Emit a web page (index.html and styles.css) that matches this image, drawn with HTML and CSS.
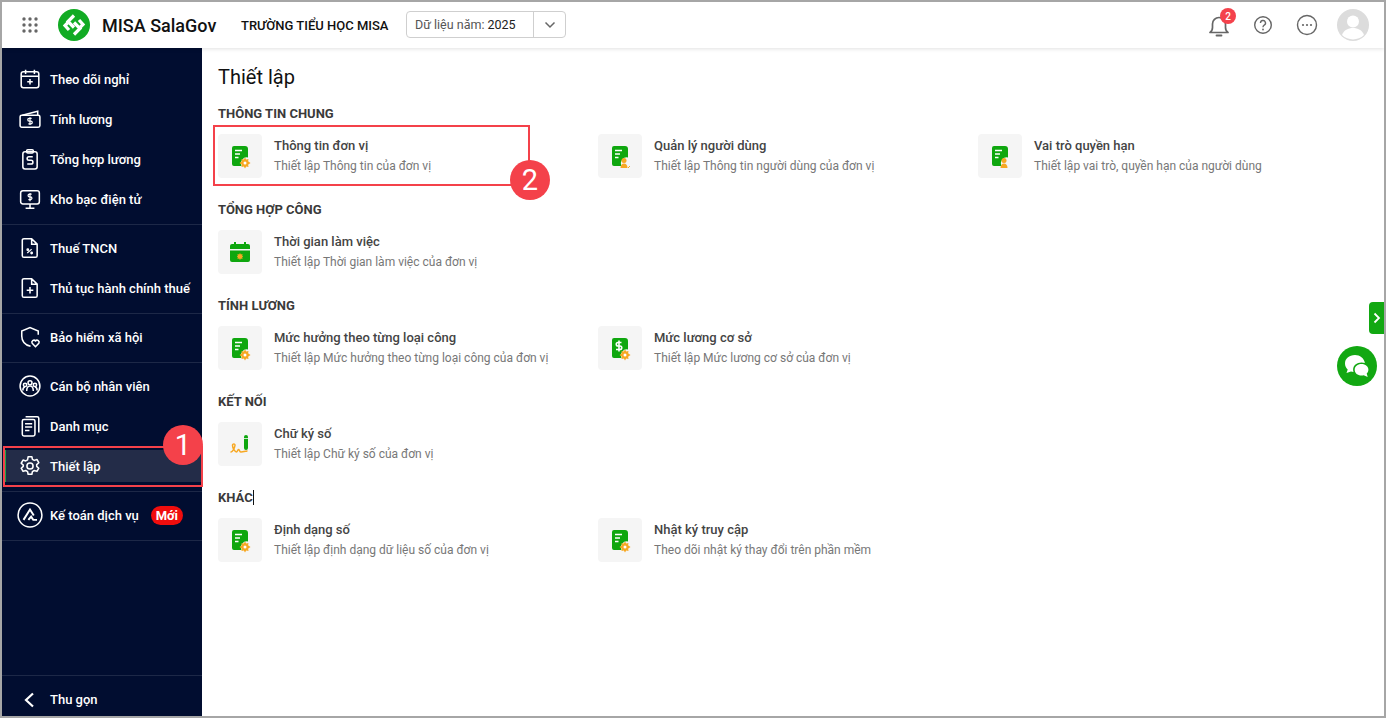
FILE: index.html
```html
<!DOCTYPE html>
<html lang="vi">
<head>
<meta charset="utf-8">
<title>MISA SalaGov</title>
<link rel="stylesheet" href="styles.css">
</head>
<body>
<svg class="defs" width="0" height="0" aria-hidden="true">
  <defs>
    <symbol id="doc" viewBox="0 0 24 24">
      <path d="M5 2h11a3 3 0 0 1 3 3v8.500a6 6 0 0 0-6.500 8.500H5a2 2 0 0 1-2-2V4a2 2 0 0 1 2-2z" fill="#0fa70f"/>
      <path d="M6 6.500h7M6 10h5M6 13.500h3.500" stroke="#fff" stroke-width="1.500" fill="none"/>
    </symbol>
    <symbol id="gear" viewBox="0 0 12 12">
      <path d="M6 .5l1.200 2 2.300-.5-.4 2.300 2.400 1.700-2.400 1.700.4 2.300-2.300-.5L6 11.500l-1.200-2-2.300.5.4-2.300L.5 6l2.400-1.700-.4-2.300 2.300.5z" fill="#f7a823"/>
      <circle cx="6" cy="6" r="1.500" fill="#fff"/>
    </symbol>
  </defs>
</svg>
<div class="app">
  <header class="topbar">
    <svg class="apps" viewBox="0 0 16 16" width="16" height="16">
      <g fill="#666"><circle cx="2" cy="2" r="1.700"/><circle cx="8" cy="2" r="1.700"/><circle cx="14" cy="2" r="1.700"/><circle cx="2" cy="8" r="1.700"/><circle cx="8" cy="8" r="1.700"/><circle cx="14" cy="8" r="1.700"/><circle cx="2" cy="14" r="1.700"/><circle cx="8" cy="14" r="1.700"/><circle cx="14" cy="14" r="1.700"/></g>
    </svg>
    <svg class="logo" viewBox="0 0 32 32" width="32" height="32">
      <circle cx="16" cy="16" r="16" fill="#12ab24"/>
      <g fill="none" stroke="#fff" stroke-width="3.200">
        <path d="M16 6.500l-6 6 6 6"/><path d="M16 25.500l6-6-6-6"/><path d="M11 21l-4-4.500 3-3"/><path d="M21 11l4 4.500-3 3"/>
      </g>
    </svg>
    <div class="brand">MISA SalaGov</div>
    <div class="school">TRƯỜNG TIỂU HỌC MISA</div>
    <div class="year">
      <div class="year-text"><span class="year-label">Dữ liệu năm:</span> 2025</div>
      <div class="year-caret">
        <svg viewBox="0 0 12 8" width="12" height="8"><path d="M1.500 1.500L6 6l4.500-4.500" fill="none" stroke="#666" stroke-width="1.500"/></svg>
      </div>
    </div>
    <div class="top-actions">
      <div class="bell">
        <svg viewBox="0 0 24 24" width="24" height="24"><path d="M3 18.500h18c-1.500-1-2.500-2.500-2.500-5V10a6.500 6.500 0 0 0-13 0v3.500c0 2.500-1 4-2.500 5z" fill="none" stroke="#666" stroke-width="1.700" stroke-linejoin="round"/><path d="M9.500 21.500h5" fill="none" stroke="#666" stroke-width="1.800" stroke-linecap="round"/></svg>
        <span class="bell-badge">2</span>
      </div>
      <svg class="act-help" viewBox="0 0 20 20" width="20" height="20"><circle cx="10" cy="10" r="8.300" fill="none" stroke="#666" stroke-width="1.400"/><path d="M7.500 8a2.500 2.500 0 1 1 3.700 2.200c-.8.500-1.200 1-1.200 2" fill="none" stroke="#666" stroke-width="1.400"/><circle cx="10" cy="14.500" r=".9" fill="#666"/></svg>
      <svg class="act-more" viewBox="0 0 22 22" width="22" height="22"><circle cx="11" cy="11" r="9.500" fill="none" stroke="#666" stroke-width="1.400"/><circle cx="7" cy="11" r="1.100" fill="#666"/><circle cx="11" cy="11" r="1.100" fill="#666"/><circle cx="15" cy="11" r="1.100" fill="#666"/></svg>
      <svg class="avatar" viewBox="0 0 32 32" width="32" height="32"><circle cx="16" cy="16" r="16" fill="#dcdcdc"/><circle cx="16" cy="12.500" r="6" fill="#fff"/><path d="M5 26c2-5 6-7 11-7s9 2 11 7a16 16 0 0 1-22 0z" fill="#fff"/></svg>
    </div>
  </header>
  <div class="body">
    <nav class="sidebar">
      <div class="nav-main">
        <div class="nav-group">
          <a class="nav-item"><svg class="nav-icon" viewBox="0 0 20 20"><rect x="2" y="3.500" width="16" height="14.500" rx="2"/><path d="M2 7.500h16M6 1.500v4M14 1.500v4M10 10v5M7.500 12.500h5"/></svg>Theo dõi nghỉ</a>
          <a class="nav-item"><svg class="nav-icon" viewBox="0 0 20 20"><rect x="1" y="6.500" width="18" height="11" rx="1.500"/><path d="M3 6.500L17 3v3.500"/><path d="M11.500 9.500H9.200a1.100 1.100 0 0 0 0 2.500h1.600a1.100 1.100 0 0 1 0 2.500H8.500M10 8.500v7" stroke-width="1.100"/></svg>Tính lương</a>
          <a class="nav-item"><svg class="nav-icon" viewBox="0 0 20 20"><rect x="3.500" y="3.500" width="13" height="15.500" rx="2"/><rect x="7" y="1.500" width="6" height="3" rx="1"/><path d="M12.500 8H9a1.500 1.500 0 0 0 0 3.200h2a1.500 1.500 0 0 1 0 3.300H7.500"/></svg>Tổng hợp lương</a>
          <a class="nav-item"><svg class="nav-icon" viewBox="0 0 20 20"><rect x="1.500" y="2.500" width="17" height="12" rx="2"/><path d="M10 14.500V18M6 18.500h8"/><path d="M11.500 5.500H9.500a1 1 0 0 0 0 2.500h1a1 1 0 0 1 0 2.500H8.500M10 4.500v7.500" stroke-width="1.100"/></svg>Kho bạc điện tử</a>
        </div>
        <div class="nav-group">
          <a class="nav-item"><svg class="nav-icon" viewBox="0 0 20 20"><path d="M4.500 1.500h7l5 5V17a1.500 1.500 0 0 1-1.500 1.500H4.500A1.500 1.500 0 0 1 3 17V3a1.500 1.500 0 0 1 1.500-1.500zM11.500 1.500v5h5"/><path d="M7.500 14.500l4-3.500" stroke-width="1.100"/><circle cx="8" cy="11.500" r=".6"/><circle cx="11.500" cy="14.500" r=".6"/></svg>Thuế TNCN</a>
          <a class="nav-item"><svg class="nav-icon" viewBox="0 0 20 20"><path d="M4.500 1.500h7l5 5V17a1.500 1.500 0 0 1-1.500 1.500H4.500A1.500 1.500 0 0 1 3 17V3a1.500 1.500 0 0 1 1.500-1.500zM11.500 1.500v5h5M10 9v6M7 12h6"/></svg>Thủ tục hành chính thuế</a>
        </div>
        <div class="nav-group">
          <a class="nav-item"><svg class="nav-icon" viewBox="0 0 20 20"><path d="M10.500 18.500C5 17 2.500 13.500 2.500 9V4.500L10 1.500l7.500 3V8"/><path d="M15 18.800l-3-3a1.900 1.900 0 0 1 3-2.300 1.900 1.900 0 0 1 3 2.300z"/></svg>Bảo hiểm xã hội</a>
        </div>
        <div class="nav-group">
          <a class="nav-item"><svg class="nav-icon" viewBox="0 0 20 20"><circle cx="10" cy="10" r="9"/><circle cx="10" cy="7" r="1.800"/><circle cx="5.500" cy="9" r="1.500"/><circle cx="14.500" cy="9" r="1.500"/><path d="M7 14.500c0-3 1.200-4.500 3-4.500s3 1.500 3 4.500M3.500 14c0-1.500.5-2.800 2-3M16.500 14c0-1.500-.5-2.800-2-3"/></svg>Cán bộ nhân viên</a>
          <a class="nav-item"><svg class="nav-icon" viewBox="0 0 20 20"><rect x="3" y="4" width="11.500" height="15" rx="1.500"/><path d="M6 1.500h10.500A1.500 1.500 0 0 1 18 3v13M5.500 8h6.500M5.500 11h6.500M5.500 14h4"/></svg>Danh mục</a>
          <a class="nav-item is-active"><svg class="nav-icon" viewBox="0 0 20 20"><circle cx="10" cy="10" r="2.800"/><path d="M8.300 1.500h3.400l.5 2.400 1.700 1 2.400-.8 1.700 2.900-1.900 1.700v1.600l1.900 1.700-1.700 2.900-2.400-.8-1.700 1-.5 2.400H8.300l-.5-2.400-1.700-1-2.400.8-1.700-2.900 1.900-1.700V9.200L2 7.500l1.700-2.900 2.400.8 1.700-1z" stroke-linejoin="round"/></svg>Thiết lập</a>
        </div>
        <div class="nav-group">
          <a class="nav-item"><svg class="nav-icon nav-icon-lg" viewBox="0 0 24 24"><circle cx="12" cy="12" r="11"/><path d="M6 16.500L12 7l3.500 5.500M10.500 16.500l2.500-3 2 3h3.500" stroke-width="1.800"/></svg>Kế toán dịch vụ<span class="new-badge">Mới</span></a>
        </div>
      </div>
      <a class="nav-collapse"><svg class="collapse-icon" viewBox="0 0 12 16" width="12" height="16"><path d="M10 1.500L3 8l7 6.500" fill="none" stroke="#fff" stroke-width="2.200"/></svg>Thu gọn</a>
    </nav>
    <main class="content">
      <h1 class="page-title">Thiết lập</h1>

      <section class="section">
        <h2 class="section-title">THÔNG TIN CHUNG</h2>
        <div class="cards">
          <div class="card">
            <div class="card-icon"><svg class="i-doc" width="24" height="24"><use href="#doc"/></svg><svg class="i-gear" width="12" height="12"><use href="#gear"/></svg></div>
            <div><div class="card-title">Thông tin đơn vị</div><div class="card-desc">Thiết lập Thông tin của đơn vị</div></div>
          </div>
          <div class="card">
            <div class="card-icon"><svg class="i-doc" width="24" height="24"><use href="#doc"/></svg><svg class="i-gear" viewBox="0 0 12 12" width="12" height="12"><circle cx="5" cy="3.500" r="2.500" fill="#f7a823"/><path d="M1.500 11c0-3 1.500-4.500 3.500-4.500S8.500 8 8.500 11z" fill="#f7a823"/><path d="M9 11l2-2" stroke="#f7a823"/></svg></div>
            <div><div class="card-title">Quản lý người dùng</div><div class="card-desc">Thiết lập Thông tin người dùng của đơn vị</div></div>
          </div>
          <div class="card">
            <div class="card-icon"><svg class="i-doc" width="24" height="24"><use href="#doc"/></svg><svg class="i-gear" viewBox="0 0 12 12" width="12" height="12"><circle cx="5" cy="3.500" r="2.500" fill="#f7a823"/><path d="M1.500 11c0-3 1.500-4.500 3.500-4.500S8.500 8 8.500 11z" fill="#f7a823"/></svg></div>
            <div><div class="card-title">Vai trò quyền hạn</div><div class="card-desc">Thiết lập vai trò, quyền hạn của người dùng</div></div>
          </div>
        </div>
      </section>

      <section class="section">
        <h2 class="section-title">TỔNG HỢP CÔNG</h2>
        <div class="cards">
          <div class="card">
            <div class="card-icon"><svg viewBox="0 0 22 22" width="22" height="22"><path d="M3 3h16a2 2 0 0 1 2 2v3H1V5a2 2 0 0 1 2-2z" fill="#0fa70f"/><path d="M1 9.500h20V19a2 2 0 0 1-2 2H3a2 2 0 0 1-2-2z" fill="#0fa70f"/><path d="M6 1v4M16 1v4" stroke="#0fa70f" stroke-width="2"/><path d="M11 12l.9 1.400 1.600-.3-.3 1.600.9.800-.9.800.3 1.600-1.600-.3-.9 1.400-.9-1.400-1.600.3.300-1.600-.9-.8.900-.8-.3-1.600 1.600.3z" fill="#f7a823"/></svg></div>
            <div><div class="card-title">Thời gian làm việc</div><div class="card-desc">Thiết lập Thời gian làm việc của đơn vị</div></div>
          </div>
        </div>
      </section>

      <section class="section">
        <h2 class="section-title">TÍNH LƯƠNG</h2>
        <div class="cards">
          <div class="card">
            <div class="card-icon"><svg class="i-doc" width="24" height="24"><use href="#doc"/></svg><svg class="i-gear" width="12" height="12"><use href="#gear"/></svg></div>
            <div><div class="card-title">Mức hưởng theo từng loại công</div><div class="card-desc">Thiết lập Mức hưởng theo từng loại công của đơn vị</div></div>
          </div>
          <div class="card">
            <div class="card-icon"><svg class="i-doc" viewBox="0 0 24 24" width="24" height="24"><path d="M5 2h11a3 3 0 0 1 3 3v8.500a6 6 0 0 0-6.500 8.500H5a2 2 0 0 1-2-2V4a2 2 0 0 1 2-2z" fill="#0fa70f"/><path d="M12.500 6.500H9a1.700 1.700 0 0 0 0 3.500h2a1.700 1.700 0 0 1 0 3.500H7M10 4.500v11" fill="none" stroke="#fff" stroke-width="1.600"/></svg><svg class="i-gear" width="12" height="12"><use href="#gear"/></svg></div>
            <div><div class="card-title">Mức lương cơ sở</div><div class="card-desc">Thiết lập Mức lương cơ sở của đơn vị</div></div>
          </div>
        </div>
      </section>

      <section class="section">
        <h2 class="section-title">KẾT NỐI</h2>
        <div class="cards">
          <div class="card">
            <div class="card-icon"><svg viewBox="0 0 24 24" width="24" height="24"><path d="M3 20c1.500 0 3.500-3.500 4-6.500.3-2-2.500-2-2.500-.2 0 2.700 2.500 6.700 4 6.700 1 0 1-2.500 2-2.500s1 2.500 2.500 2.500c1.500 0 3.500-.5 6-1" fill="none" stroke="#f7a823" stroke-width="1.500" stroke-linecap="round"/><rect x="16" y="3" width="4" height="15" rx="2" fill="#0fa70f"/><path d="M16 6.500h4" stroke="#f5f5f5" stroke-width=".8"/></svg></div>
            <div><div class="card-title">Chữ ký số</div><div class="card-desc">Thiết lập Chữ ký số của đơn vị</div></div>
          </div>
        </div>
      </section>

      <section class="section">
        <h2 class="section-title">KHÁC<span class="caret"></span></h2>
        <div class="cards">
          <div class="card">
            <div class="card-icon"><svg class="i-doc" width="24" height="24"><use href="#doc"/></svg><svg class="i-gear" width="12" height="12"><use href="#gear"/></svg></div>
            <div><div class="card-title">Định dạng số</div><div class="card-desc">Thiết lập định dạng dữ liệu số của đơn vị</div></div>
          </div>
          <div class="card">
            <div class="card-icon"><svg class="i-doc" width="24" height="24"><use href="#doc"/></svg><svg class="i-gear" width="12" height="12"><use href="#gear"/></svg></div>
            <div><div class="card-title">Nhật ký truy cập</div><div class="card-desc">Theo dõi nhật ký thay đổi trên phần mềm</div></div>
          </div>
        </div>
      </section>
    </main>
  </div>

  <div class="side-tab"><svg viewBox="0 0 8 12" width="8" height="12"><path d="M1.500 1.500L6 6l-4.500 4.500" fill="none" stroke="#fff" stroke-width="1.800"/></svg></div>
  <div class="chat">
    <svg viewBox="0 0 40 40" width="40" height="40"><path d="M18 9c-6 0-10 3.600-10 8.500 0 2.400 1 4.500 2.700 6L9.500 27l4.500-1.500c.8.300 1.600.5 2.500.6-.3-1-.4-1.700-.4-2.300 0-4.400 3.600-7.300 8.400-7.300 1.300 0 2.400.2 3.400.6C27 12 23 9 18 9z" fill="#fff"/><path d="M24.500 18c-4 0-6.800 2.500-6.800 5.800s2.800 5.800 6.800 5.800c.8 0 1.500-.1 2.200-.3l4 1.700-1-3.500c1.100-1 1.700-2.300 1.700-3.700 0-3.300-2.900-5.800-6.900-5.800z" fill="#fff"/></svg>
  </div>

  <div class="mark mark-one"></div>
  <div class="step step-one">1</div>
  <div class="mark mark-two"></div>
  <div class="step step-two">2</div>
</div>
</body>
</html>
```

FILE: styles.css
```css
* { box-sizing: border-box; }
html, body { margin: 0; padding: 0; height: 100%; }
body { font-family: Roboto, "Liberation Sans", sans-serif; background: #fff; color: #212121; overflow: hidden; }
.defs { position: absolute; }

.app {
  position: relative;
  width: 1386px;
  height: 718px;
  border: 2px solid #a6a6a6;
  display: flex;
  flex-direction: column;
  overflow: hidden;
  background: #fff;
}

.topbar {
  height: 46px;
  flex: none;
  display: flex;
  align-items: center;
  position: relative;
  z-index: 2;
  background: #fff;
  box-shadow: 0 1px 4px rgba(0, 0, 0, .12);
}
.apps { margin-left: 20px; flex: none; }
.logo { margin-left: 20px; flex: none; }
.brand { margin-left: 12px; font-size: 18px; font-weight: 500; color: #111; width: 139px; white-space: nowrap; }
.school { font-size: 13px; font-weight: 500; color: #111; width: 165px; white-space: nowrap; }
.year {
  width: 160px;
  height: 27px;
  margin-top: -1px;
  border: 1px solid #cfcfcf;
  border-radius: 4px;
  display: flex;
  align-items: center;
  font-size: 12.500px;
  color: #212121;
}
.year-text { flex: 1; padding-left: 8px; white-space: nowrap; }
.year-label { color: #555; }
.year-caret { width: 32px; height: 100%; border-left: 1px solid #cfcfcf; display: flex; align-items: center; justify-content: center; }

.top-actions { margin-left: auto; display: flex; align-items: center; padding-right: 15px; }
.bell { position: relative; width: 24px; height: 24px; margin-top: 2px; }
.bell svg { display: block; }
.bell-badge {
  position: absolute;
  left: 13px;
  top: -6px;
  width: 16px;
  height: 16px;
  border-radius: 50%;
  background: #f4424c;
  color: #fff;
  font-size: 10px;
  font-weight: 500;
  display: flex;
  align-items: center;
  justify-content: center;
}
.act-help { margin-left: 22px; }
.act-more { margin-left: 23px; }
.avatar { margin-left: 19px; }

.body { flex: 1; display: flex; min-height: 0; }

.sidebar {
  width: 200px;
  flex: none;
  background: #010d30;
  color: #fff;
  display: flex;
  flex-direction: column;
}
.nav-main { flex: 1; padding-top: 8px; }
.nav-group { padding: 3px 0 5px; border-bottom: 1px solid #1d2847; }
.nav-item {
  height: 40px;
  display: flex;
  align-items: center;
  padding-left: 48px;
  position: relative;
  font-size: 13px;
  font-weight: 500;
  color: #fff;
  white-space: nowrap;
}
.nav-icon {
  position: absolute;
  left: 17px;
  top: 9px;
  width: 22px;
  height: 22px;
  fill: none;
  stroke: #fff;
  stroke-width: 1.400;
}
.nav-icon-lg { left: 15px; top: 7px; width: 26px; height: 26px; }
.nav-item.is-active { isolation: isolate; }
.nav-item.is-active::before {
  content: "";
  position: absolute;
  z-index: -1;
  left: 2px;
  right: 0;
  top: 4px;
  bottom: 4px;
  background: #232c48;
  border-left: 2px solid #1fa64a;
}
.new-badge {
  margin-left: 12px;
  width: 32px;
  height: 19px;
  border-radius: 10px;
  background: #f00d0d;
  color: #fff;
  font-size: 13px;
  font-weight: 700;
  display: flex;
  align-items: center;
  justify-content: center;
}
.nav-collapse {
  height: 41px;
  flex: none;
  border-top: 1px solid #1d2847;
  display: flex;
  align-items: center;
  padding: 7px 0 0 48px;
  position: relative;
  font-size: 13px;
  font-weight: 500;
}
.collapse-icon { position: absolute; left: 21px; top: 16px; }

.content { flex: 1; padding: 0 16px; min-width: 0; }
.page-title { margin: 0; padding-top: 16px; height: 56px; font-size: 20px; line-height: 26px; font-weight: 400; color: #111; }
.section { height: 96px; }
.section-title { margin: 0; font-size: 13px; line-height: 20px; font-weight: 700; color: #3a3a3a; height: 20px; }
.caret { display: inline-block; width: 1px; height: 15px; background: #111; vertical-align: -3px; }
.cards { display: flex; margin-top: 10px; }
.card { width: 380px; display: flex; gap: 12px; align-items: center; height: 44px; }
.card-icon {
  width: 44px;
  height: 44px;
  flex: none;
  position: relative;
  border-radius: 4px;
  background: #f5f5f5;
  display: flex;
  align-items: center;
  justify-content: center;
}
.i-doc { margin-left: 2px; }
.i-gear { position: absolute; left: 21px; top: 23px; }
.card-title { font-size: 13px; line-height: 20px; font-weight: 500; color: #444; }
.card-desc { font-size: 12px; line-height: 20px; color: #777; white-space: nowrap; }

.side-tab {
  position: absolute;
  right: 0;
  top: 300px;
  width: 15px;
  height: 32px;
  background: #12a812;
  border-radius: 4px 0 0 4px;
  display: flex;
  align-items: center;
  justify-content: center;
}
.chat {
  position: absolute;
  left: 1335px;
  top: 344px;
  width: 40px;
  height: 40px;
  border-radius: 50%;
  background: #12a812;
}
.chat svg { display: block; }

.mark { position: absolute; border: 2px solid #f4414a; pointer-events: none; }
.mark-one { left: 1px; top: 444px; width: 200px; height: 41px; }
.mark-two { left: 211px; top: 123px; width: 317px; height: 61px; }
.step {
  position: absolute;
  width: 40px;
  height: 40px;
  border-radius: 50%;
  background: #f4414a;
  color: #fff;
  font-size: 29px;
  display: flex;
  align-items: center;
  justify-content: center;
}
.step-one { left: 161px; top: 423px; }
.step-two { left: 508px; top: 158px; }
```
